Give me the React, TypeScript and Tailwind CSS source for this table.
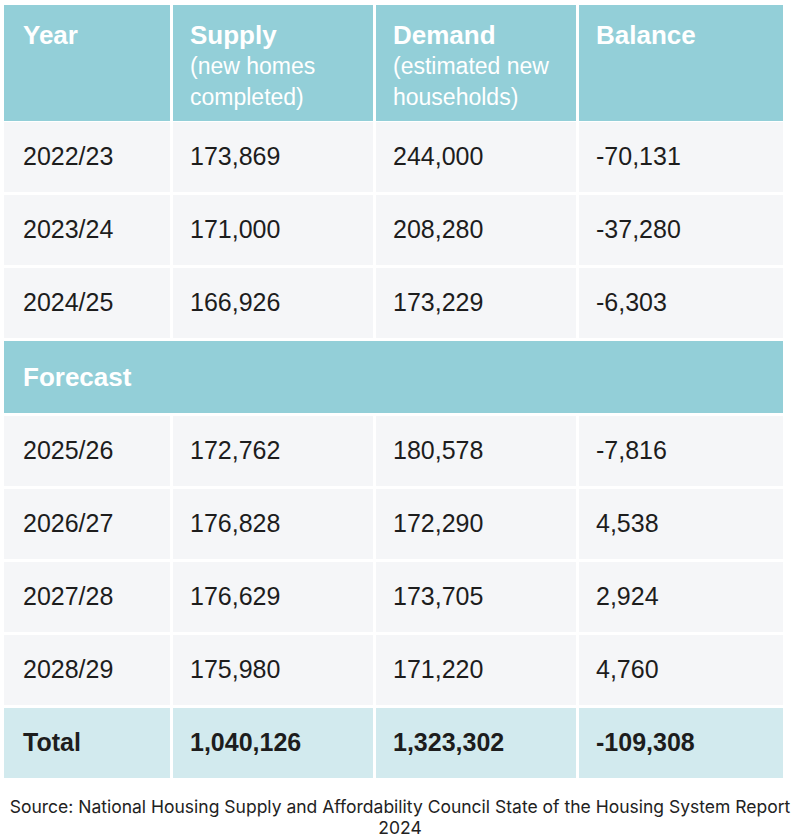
const rows = [
  ['2022/23', '173,869', '244,000', '-70,131'],
  ['2023/24', '171,000', '208,280', '-37,280'],
  ['2024/25', '166,926', '173,229', '-6,303'],
];

const forecast = [
  ['2025/26', '172,762', '180,578', '-7,816'],
  ['2026/27', '176,828', '172,290', '4,538'],
  ['2027/28', '176,629', '173,705', '2,924'],
  ['2028/29', '175,980', '171,220', '4,760'],
];

const cols = 'grid grid-cols-[166px_200px_200px_1fr] gap-x-[3px]';

function DataRow({ cells, total = false }: { cells: string[]; total?: boolean }) {
  return (
    <div className={`${cols} h-[70px]`}>
      {cells.map((c, i) => (
        <div
          key={i}
          className={`flex items-center text-[25px] text-[#1d1d1d] ${i === 0 ? 'pl-[19px]' : 'pl-[17px]'} ${
            total ? 'bg-[#d2eaee] font-bold' : 'bg-[#f5f6f8]'
          }`}
        >
          {c}
        </div>
      ))}
    </div>
  );
}

export default function App() {
  return (
    <div className="w-[800px] bg-white pt-[5px]">
      <div className="ml-[4px] w-[779px] font-['Liberation_Sans',Arial,sans-serif]">
        <div className={`${cols} h-[116px]`}>
          {[
            ['Year', ''],
            ['Supply', '(new homes completed)'],
            ['Demand', '(estimated new households)'],
            ['Balance', ''],
          ].map(([h, sub], i) => (
            <div
              key={h}
              className={`bg-[#93cfd8] pr-[12px] pt-[14px] text-white ${i === 0 ? 'pl-[19px]' : 'pl-[17px]'}`}
            >
              <div className="text-[26px] font-bold leading-[32px]">{h}</div>
              {sub && <div className="text-[23px] leading-[31px]">{sub}</div>}
            </div>
          ))}
        </div>

        <div className="mt-[1px] flex flex-col gap-y-[3px]">
          {rows.map((r) => (
            <DataRow key={r[0]} cells={r} />
          ))}
          <div className="flex h-[72px] items-center bg-[#93cfd8] pl-[19px] text-[26px] font-bold text-white">
            Forecast
          </div>
          {forecast.map((r) => (
            <DataRow key={r[0]} cells={r} />
          ))}
          <DataRow cells={['Total', '1,040,126', '1,323,302', '-109,308']} total />
        </div>
      </div>

      <p className="mt-[18px] text-center font-['Inter',sans-serif] text-[17.5px] leading-[21px] text-[#222]">
        Source: National Housing Supply and Affordability Council State of the Housing System Report 2024
      </p>
    </div>
  );
}
